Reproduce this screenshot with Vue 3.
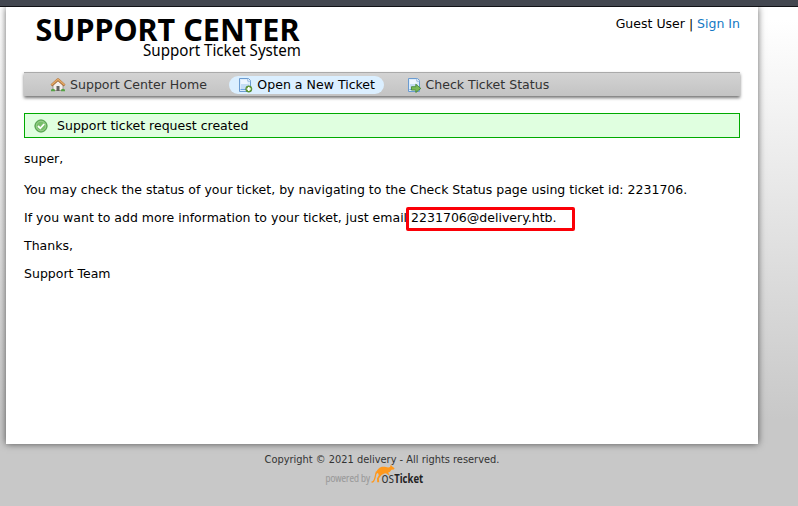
<script setup>
const links = [
  { label: 'Support Center Home', icon: 'home', active: false },
  { label: 'Open a New Ticket', icon: 'new', active: true },
  { label: 'Check Ticket Status', icon: 'status', active: false },
]
const ticketId = '2231706'
</script>

<template>
  <div class="page">
    <div class="topbar"></div>
    <div class="container">
      <header class="header">
        <svg class="logo" width="270" height="50" viewBox="34 13 270 50">
          <text class="logo-title" x="35.5" y="41" textLength="264" lengthAdjust="spacingAndGlyphs">SUPPORT CENTER</text>
          <text class="logo-sub" x="143" y="56" textLength="158" lengthAdjust="spacingAndGlyphs">Support Ticket System</text>
        </svg>
        <p class="user">Guest User | <a>Sign In</a></p>
      </header>
      <nav class="nav">
        <a v-for="l in links" :key="l.icon" class="link" :class="{ active: l.active }">
          <svg v-if="l.icon === 'home'" width="16" height="16" viewBox="0 0 16 16">
            <path d="M3 8 8 3.5 13 8v5.5H3z" fill="#f3efec" stroke="#8c8580" stroke-width=".7" />
            <path d="M6.5 9h3v5h-3z" fill="#64615f" />
            <path d="M1.4 8.4 8 2.6l6.6 5.8" fill="none" stroke="#a66c36" stroke-width="2.6" stroke-linejoin="round" />
            <path d="M1.5 8 8 2.3 14.5 8" fill="none" stroke="#e5aa68" stroke-width="1.5" stroke-linejoin="round" />
            <path d="M1 12.8q2-2 4 0v1.4H1zM11 12.8q2-2 4 0v1.4h-4z" fill="#55a345" />
          </svg>
          <svg v-else width="16" height="16" viewBox="0 0 16 16">
            <path d="M2.5 1.5h9l2 2v11h-11z" fill="#dcecfb" stroke="#6b9bd0" />
            <path d="M4 3h6.5v4H4z" fill="#eef6ff" />
            <path d="M4 7h8v5H4z" fill="#c5ddf5" />
            <path d="M3.5 12.5h7" stroke="#6ba3df" />
            <path d="M10.8 1.5v2.7h2.7" fill="#fff" stroke="#80aad8" stroke-width=".8" />
            <template v-if="l.icon === 'new'">
              <circle cx="11.8" cy="12" r="3.2" fill="#659d39" stroke="#467d2b" stroke-width=".5" />
              <path d="M11.800 10v4M9.800 12h4" stroke="#fff" stroke-width="1.7" />
            </template>
            <path v-else d="M5.5 9.7h4.3V7.2l5 4.2-5 4.1v-2.4H5.5z" fill="#79b958" stroke="#3f822c" stroke-width=".8" />
          </svg>
          <span>{{ l.label }}</span>
        </a>
      </nav>
      <div class="notice">
        <svg width="16" height="16" viewBox="0 0 16 16">
          <circle cx="8" cy="8" r="6.1" fill="#69b95c" stroke="#4b9a45" />
          <circle cx="8" cy="8" r="4.8" fill="#77be6a" stroke="#add9a3" stroke-width=".7" />
          <path d="m5 8 2.3 2.3L11.2 6" fill="none" stroke="#fff" stroke-width="1.8" />
        </svg>
        <span>Support ticket request created</span>
      </div>
      <main class="message">
        <p class="greeting">super,</p>
        <p>You may check the status of your ticket, by navigating to the Check Status page using ticket id: {{ ticketId }}.</p>
        <p>If you want to add more information to your ticket, just email <span class="email">{{ ticketId }}@delivery.htb.<i class="mark"></i></span></p>
        <p>Thanks,</p>
        <p>Support Team</p>
      </main>
    </div>
    <footer class="footer">
      <p>Copyright © 2021 delivery - All rights reserved.</p>
      <svg class="powered" width="110" height="24" viewBox="325 464 110 24">
        <text class="by" x="325.5" y="481.5" textLength="44.5" lengthAdjust="spacingAndGlyphs">powered by</text>
        <path d="M371.6 482C375.500 482.300 374.600 476 376.600 471.500" fill="none" stroke="#ff981c" stroke-width="1.300" />
        <path d="M375.900 474C376.600 469.500 379.600 466.800 383.200 466.800C386 466.800 388 468 390 467L390.800 464.800L392.200 466.400L394.600 468.300L393.800 469.600L391.500 469.800C390.600 471.400 389.500 472.400 388 472.800L389.500 474.400L388.600 475.200L386 473.300C383.500 473.600 382 474.600 380.500 476.300L378.800 478.600L379.200 482.300H377.200L377 478.500L378.800 475.200L378 473Z" fill="#ff981c" />
        <text class="os" x="381.500" y="482.500" textLength="12.500" lengthAdjust="spacingAndGlyphs">os</text>
        <text class="ticket" x="394.200" y="482.500" textLength="29" lengthAdjust="spacingAndGlyphs">Ticket</text>
      </svg>
    </footer>
  </div>
</template>

<style>
body { margin: 0; background: #c8c8c8; overflow: hidden; }
</style>
<style scoped>
.page { height: 506px; overflow: hidden; box-sizing: border-box; font: 12.52px/18px "DejaVu Sans", sans-serif; color: #000; background: linear-gradient(#fff 7px, #fff 20px, #c8c8c8 420px); }
.topbar { height: 6px; background: #434750; border-bottom: 1px solid #111216; position: relative; }
.container { box-sizing: border-box; width: 752px; height: 437px; margin-left: 6px; padding: 0 18px; background: #fff; box-shadow: 0 0 7px rgba(0, 0, 0, .6); clip-path: inset(0 -12px -12px); }
.header { height: 65px; display: flex; justify-content: space-between; }
.logo { margin: 6px 0 0 10px; overflow: visible; }
.logo-title { font: 700 30px "Noto Sans", sans-serif; }
.logo-sub { font: 15.5px "Noto Sans", sans-serif; }
.user { margin: 8px 0 0; }
.user a { color: #1479c4; }
.nav { box-sizing: border-box; height: 24px; display: flex; align-items: center; gap: 14px; padding-left: 18px; border-top: 1px solid #aaa; background: linear-gradient(#d3d3d3, #c3c3c3); box-shadow: 0 2px 3px rgba(0, 0, 0, .55); }
.link { box-sizing: border-box; height: 18px; display: flex; align-items: center; gap: 4px; padding: 0 8.5px 0 8px; border-radius: 10px; color: #333; font-size: 12.56px; white-space: nowrap; }
.link.active { color: #000; background: #dbefff; }
.notice { box-sizing: border-box; height: 25px; margin-top: 17px; padding-left: 8px; display: flex; align-items: center; gap: 8px; border: 1px solid #0a0; background: #e0ffe0; }
.message p { margin: 0 0 10px; white-space: nowrap; }
.message .greeting { margin: 12px 0 13px; }
.email { position: relative; }
.mark { position: absolute; left: -5px; top: -3px; box-sizing: border-box; width: 169px; height: 24px; border: 3px solid #fb0007; border-radius: 2px; }
.footer { width: 764px; padding-top: 8px; text-align: center; font-size: 9.85px; line-height: 15px; color: #333; }
.footer p { margin: 0; }
.powered { display: block; margin: -3px 0 0 325px; overflow: visible; }
.by { font: 10.5px "Open Sans", sans-serif; fill: #999; stroke: #999; stroke-width: .2; }
.os { font: 14px "Open Sans", sans-serif; fill: #333; }
.ticket { font: 700 12.5px "Open Sans", sans-serif; fill: #222; }
</style>
